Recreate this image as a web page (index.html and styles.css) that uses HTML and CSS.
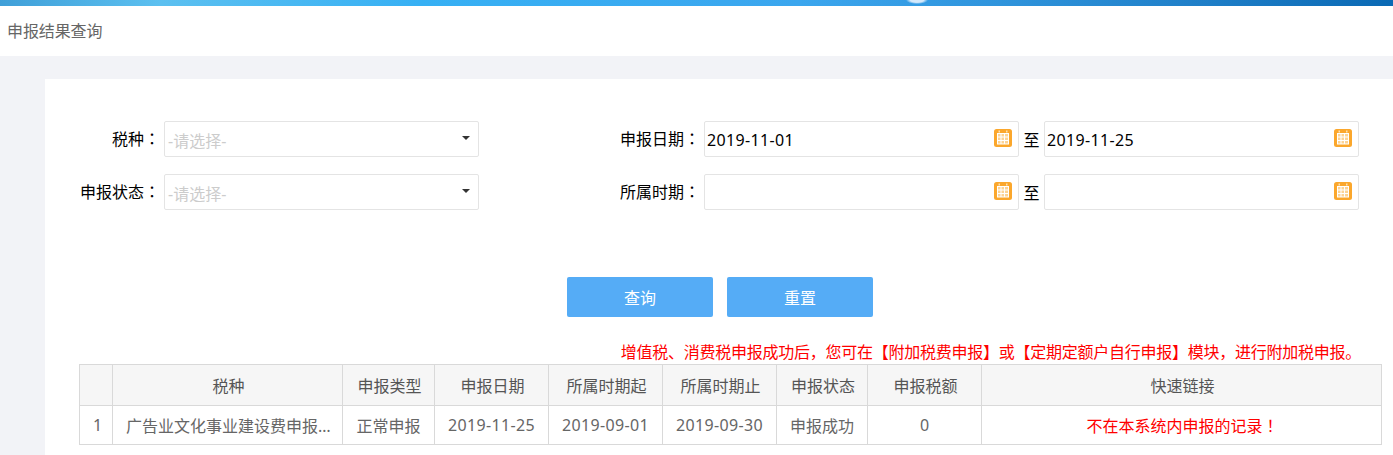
FILE: index.html
```html
<!DOCTYPE html>
<html lang="zh-CN">

<head>
    <meta charset="UTF-8" />
    <title>申报结果查询</title>
    <link rel="stylesheet" href="styles.css">
</head>

<body>
    <svg class="icon-defs" width="0" height="0">
        <symbol id="icon-cal" viewBox="0 0 18 18">
            <rect width="18" height="18" rx="2.500" fill="#fba72c" />
            <rect x="3" y="4" width="12" height="11.500" fill="#fff" />
            <rect x="4.500" y="1.500" width="1.500" height="2" fill="#fde0b0" />
            <rect x="12" y="1.500" width="1.500" height="2" fill="#fde0b0" />
            <path d="M4 5h2.500v2.500H4zM7.500 5H10v2.500H7.500zM11 5h3v2.500h-3zM4 8.500h2.500V11H4zM7.500 8.500H10V11H7.500zM11 8.500h3V11h-3zM4 12h2.500v2.500H4zM7.500 12H10v2.500H7.500zM11 12h3v2.500h-3z" fill="#fcd394" />
        </symbol>
    </svg>

    <div class="top-banner"></div>
    <div class="page-title">申报结果查询</div>

    <div class="panel">
        <div class="form-row">
            <label class="form-label">税种<span class="mid-punct" lang="zh-TW">：</span></label>
            <div class="field">
                <span class="placeholder">-请选择-</span>
                <i class="caret"></i>
            </div>
            <label class="form-label wide">申报日期<span class="mid-punct" lang="zh-TW">：</span></label>
            <div class="field">
                <span class="field-value">2019-11-01</span>
                <svg class="cal"><use href="#icon-cal" /></svg>
            </div>
            <span class="range-to">至</span>
            <div class="field">
                <span class="field-value">2019-11-25</span>
                <svg class="cal"><use href="#icon-cal" /></svg>
            </div>
        </div>
        <div class="form-row">
            <label class="form-label">申报状态<span class="mid-punct" lang="zh-TW">：</span></label>
            <div class="field">
                <span class="placeholder">-请选择-</span>
                <i class="caret"></i>
            </div>
            <label class="form-label wide">所属时期<span class="mid-punct" lang="zh-TW">：</span></label>
            <div class="field">
                <span class="field-value"></span>
                <svg class="cal"><use href="#icon-cal" /></svg>
            </div>
            <span class="range-to">至</span>
            <div class="field">
                <span class="field-value"></span>
                <svg class="cal"><use href="#icon-cal" /></svg>
            </div>
        </div>

        <div class="btn-row">
            <button class="btn">查询</button>
            <button class="btn">重置</button>
        </div>

        <div class="notice">增值税、消费税申报成功后，您可在【附加税费申报】或【定期定额户自行申报】模块，进行附加税申报。</div>

        <table class="result-table">
            <colgroup>
                <col class="col-index">
                <col class="col-tax">
                <col class="col-type">
                <col class="col-date">
                <col class="col-date">
                <col class="col-date">
                <col class="col-state">
                <col class="col-date">
                <col>
            </colgroup>
            <thead>
                <tr>
                    <th></th>
                    <th>税种</th>
                    <th>申报类型</th>
                    <th>申报日期</th>
                    <th>所属时期起</th>
                    <th>所属时期止</th>
                    <th>申报状态</th>
                    <th>申报税额</th>
                    <th>快速链接</th>
                </tr>
            </thead>
            <tbody>
                <tr>
                    <td>1</td>
                    <td class="ellipsis">广告业文化事业建设费申报表</td>
                    <td>正常申报</td>
                    <td class="num">2019-11-25</td>
                    <td class="num">2019-09-01</td>
                    <td class="num">2019-09-30</td>
                    <td>申报成功</td>
                    <td>0</td>
                    <td class="red">不在本系统内申报的记录<span class="mid-punct" lang="zh-TW">！</span></td>
                </tr>
            </tbody>
        </table>
    </div>
</body>

</html>
```

FILE: styles.css
```css
/* 布局 */
body {
    font-family: 'Noto Sans', 'Noto Sans CJK SC', sans-serif;
    font-size: 16px;
    margin: 0;
    padding: 0;
    background: #f2f3f7;
    color: #000;
}

.icon-defs {
    position: absolute;
}

/* 居中的标点 */
.mid-punct {
    font-family: 'Noto Sans CJK TC', sans-serif;
}

.top-banner {
    height: 6px;
    background:
        radial-gradient(ellipse 11px 4px at 917px 0, #d4e9fb 60%, rgba(212, 233, 251, 0) 100%),
        linear-gradient(90deg, #3f9fd8 0, #5cc0f0 160px, #36b0f4 420px, #3ba6ee 800px, #2f94dc 1000px, #1f7fc8 1200px, #0a69b4 100%);
}

.page-title {
    height: 50px;
    line-height: 50px;
    padding-left: 7px;
    margin-bottom: 23px;
    background: #fff;
    color: #666;
    letter-spacing: -.1px;
}

.panel {
    margin-left: 45px;
    padding: 42px 11px 11px 34px;
    background: #fff;
}

/* 查询表单 */
.form-row {
    display: flex;
    align-items: center;
    margin-bottom: 17px;
}

.form-label {
    width: 81px;
    padding: 0 4px 2px 0;
    text-align: right;
}

.form-label.wide {
    width: 221px;
}

.field {
    width: 315px;
    height: 36px;
    box-sizing: border-box;
    display: flex;
    align-items: center;
    justify-content: space-between;
    padding: 2px 6px 0 2px;
    border: 1px solid #e4e4e4;
    border-radius: 2px;
    background: #fff;
}

.placeholder {
    margin: -1px 0 0 1px;
    color: #ccc;
}

.field-value {
    letter-spacing: .35px;
}

.caret {
    width: 0;
    height: 0;
    margin: -5px 2px 0 0;
    border-left: 4px solid transparent;
    border-right: 4px solid transparent;
    border-top: 4px solid #333;
}

.cal {
    width: 18px;
    height: 18px;
    margin-top: -4px;
}

.range-to {
    width: 25px;
    text-align: center;
}

/* 按钮 */
.btn-row {
    display: flex;
    gap: 14px;
    padding-left: 488px;
    margin-top: 67px;
}

.btn {
    width: 146px;
    height: 40px;
    border: none;
    border-radius: 2px;
    background: #55acf6;
    color: #fff;
    font-family: inherit;
    font-size: 16px;
    cursor: pointer;
}

.notice {
    margin-top: 23px;
    height: 24px;
    line-height: 24px;
    padding-right: 21px;
    text-align: right;
    white-space: nowrap;
    letter-spacing: -.25px;
    color: #f00;
}

/* 结果表格 */
.result-table {
    width: 100%;
    table-layout: fixed;
    border-collapse: collapse;
    color: #666;
}

.col-index {
    width: 33px;
}

.col-tax {
    width: 230px;
}

.col-type {
    width: 92px;
}

.col-date {
    width: 114px;
}

.col-state {
    width: 91px;
}

.result-table th,
.result-table td {
    border: 1px solid #d9d9d9;
    text-align: center;
    font-weight: normal;
    padding: 0 13px;
    white-space: nowrap;
}

.result-table th {
    height: 40px;
    padding: 0 12px 0 14px;
    background: #f6f6f6;
    color: #555;
}

.result-table td {
    height: 38px;
}

.result-table .num {
    padding: 0;
    letter-spacing: .35px;
}

.result-table .ellipsis {
    padding-right: 11px;
    overflow: hidden;
    text-overflow: ellipsis;
}

.result-table .red {
    padding: 0 12px 0 14px;
    color: #f00;
}
```
